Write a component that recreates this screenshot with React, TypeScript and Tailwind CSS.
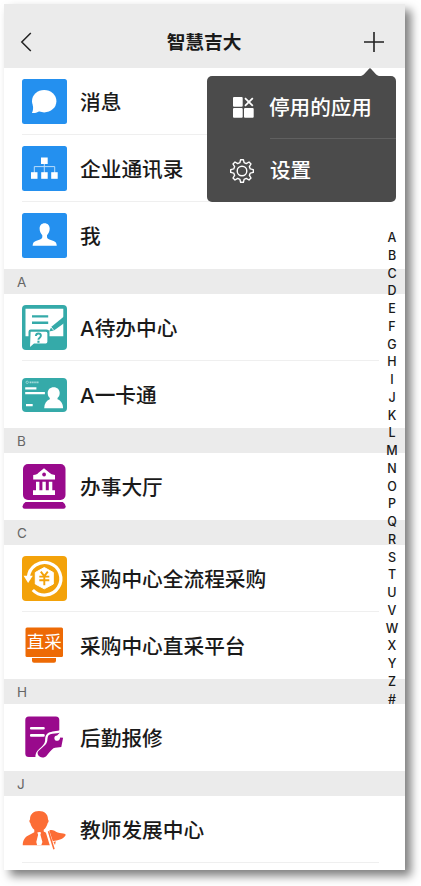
import type { ReactNode } from 'react';

const MessageIcon = () => (
  <svg viewBox="0 0 45 45" className="w-[45px] h-[45px]">
    <rect width="45" height="45" rx="2.5" fill="#2490ef" />
    <ellipse cx="22.2" cy="22.2" rx="12.2" ry="11.2" fill="#fff" />
    <path d="M10.8 26c.6 3 .3 5.800-.9 8 3.200.3 5.700-.5 8-2.300z" fill="#fff" />
  </svg>
);

const OrgIcon = () => (
  <svg viewBox="0 0 45 45" className="w-[45px] h-[45px]">
    <rect width="45" height="45" rx="2.5" fill="#2490ef" />
    <path d="M22.3 17v10M12.3 27v-6.400h20.400V27" fill="none" stroke="#b9dcfb" strokeWidth="1" />
    <g fill="#fff">
      <rect x="19" y="11.5" width="6.700" height="6.500" />
      <rect x="9" y="26.200" width="6.500" height="6.600" />
      <rect x="19.200" y="26.200" width="6.500" height="6.600" />
      <rect x="29.200" y="26.200" width="6.500" height="6.600" />
    </g>
  </svg>
);

const MeIcon = () => (
  <svg viewBox="0 0 45 45" className="w-[45px] h-[45px]">
    <rect width="45" height="45" rx="2.5" fill="#2490ef" />
    <path
      d="M22.600 10.300c3 0 5.100 2.200 5.100 5.300 0 2.700-1.100 5.200-2.700 6.600v1.900c0 1.300 1 1.900 2.400 2.400l4.200 1.500c2 .8 3 1.900 3.200 4.700H10.600c.2-2.800 1.200-3.900 3.200-4.700l4.200-1.500c1.400-.5 2.300-1.100 2.300-2.400v-1.900c-1.600-1.400-2.700-3.900-2.700-6.600 0-3.100 2-5.300 5-5.300z"
      fill="#fff"
    />
  </svg>
);

const TodoIcon = () => (
  <svg viewBox="0 0 45 45" className="w-[45px] h-[45px]">
    <rect width="45" height="45" rx="4" fill="#35aaa9" />
    <path d="M3.500 3.800h37.800v27.500H3.500z" fill="#fff" />
    <path d="M10 11.400h16.200M10 17.700h16.200" stroke="#35aaa9" strokeWidth="2.400" />
    <path d="M42 11.500 29.400 21.800l-2.300 4.600 4.800-.9L42 18.300z" fill="#35aaa9" />
    <path d="m29 21.900 2.800 3.600" stroke="#fff" strokeWidth=".9" />
    <path
      d="M8.700 25.700h15.600q2 0 2 2v9.600q0 2-2 2H12.200L7.700 42.500V26.700q0-1 1-1z"
      fill="#fff"
      stroke="#35aaa9"
      strokeWidth="2.400"
    />
    <path d="M8.700 26.700h15.200q1.400 0 1.400 1.500v8.600q0 1.600-1.500 1.600H11.900L8 42z" fill="#fff" />
    <path d="M13.900 31c.1-1.700 1.100-2.500 2.500-2.500 1.500 0 2.500.9 2.500 2.200 0 1.900-2.500 2-2.500 4" fill="none" stroke="#35aaa9" strokeWidth="1.900" />
    <rect x="15.400" y="35.700" width="2.100" height="2.100" fill="#35aaa9" />
  </svg>
);

const CardIcon = () => (
  <svg viewBox="0 0 45 34" className="w-[45px] h-[34px]">
    <rect width="45" height="34" rx="4" fill="#35aaa9" />
    <circle cx="5.200" cy="4.300" r="1.200" fill="none" stroke="#c9ebea" strokeWidth=".6" />
    <path d="M7.700 4.300h9" stroke="#c9ebea" strokeWidth="1.800" strokeDasharray="1.100 .8" />
    <path d="M3.200 10.300h11.200M3.200 15.200h19.700M4 27.200h6.700" stroke="#fff" strokeWidth="2.300" />
    <path
      d="M31.700 9.300c3.600 0 6 2.400 6 5.700 0 2.100-.8 3.900-2.200 5.100v1.200c3.400 1.300 5.500 4.400 5.600 8.900H22.200c.1-4.500 2.200-7.600 5.600-8.900v-1.200c-1.300-1.200-2.100-3-2.100-5.100 0-3.300 2.400-5.700 6-5.700z"
      fill="#fff"
    />
  </svg>
);

const HallIcon = () => (
  <svg viewBox="0 0 45 45" className="w-[45px] h-[45px]">
    <rect x="1" width="42.500" height="36" rx="5" fill="#990a8c" />
    <path d="M3.500 38h37.300q2.900 2 2.900 4.600 0 2.200-2.200 2.200H2.700q-2.200 0-2.200-2.200Q.5 40 3.500 38z" fill="#990a8c" />
    <path d="m22 4.200 5.800 4.800q1 1.500 5.200 2v4.600H11.200V11q4.200-.5 5-2z" fill="#fff" />
    <circle cx="22.100" cy="10.500" r="1.900" fill="#990a8c" />
    <path d="M14 17.800h3.400v8.400h3V17.800h3.400v8.400h3V17.800h3.500v8.400H33V31H11v-4.800h3z" fill="#fff" />
  </svg>
);

const PurchaseIcon = () => (
  <svg viewBox="0 0 45 45" className="w-[45px] h-[45px]">
    <rect width="45" height="45" rx="4" fill="#f3a20a" />
    <path d="M6.300 21.500A16.300 16.300 0 1 1 10.800 34" fill="none" stroke="#fff" strokeWidth="3.200" />
    <path d="M1.600 19.800h9.200L6.100 27z" fill="#fff" />
    <path d="m22.300 11.500 9 5v11.500l-9 4.800-9-4.800V16.500z" fill="#fff" stroke="#fff" strokeWidth="1" strokeLinejoin="round" />
    <path d="m18.800 15.700 3.500 4.500 3.500-4.500M17.300 20.600h10M17.300 24.300h10M22.300 20v9.300" fill="none" stroke="#f3a20a" strokeWidth="1.900" />
  </svg>
);

const DirectIcon = () => (
  <svg viewBox="0 0 45 45" className="w-[45px] h-[45px]">
    <rect x="3.500" y="4.400" width="37.500" height="29.600" rx="1.500" fill="#ed6a05" />
    <path d="M10 35h24v2.800q0 2-2 2H12q-2 0-2-2z" fill="#ed6a05" />
    <text x="22.200" y="25.200" textAnchor="middle" fontSize="17.500" fill="#fff" fontFamily="'Noto Sans CJK SC', sans-serif">
      直采
    </text>
  </svg>
);

const RepairIcon = () => (
  <svg viewBox="0 0 45 45" className="w-[45px] h-[45px]">
    <rect x="3.300" y="1.400" width="34" height="40.700" rx="3.500" fill="#990a8c" />
    <path d="M9.200 13.200H21.500M9.200 20.400H21.500" stroke="#fff" strokeWidth="2.600" strokeLinecap="round" />
    <path d="M13.400 43c-.3-4.200 1-6.500 4-9.300 2.700-2.500 5.500-4.800 5.700-8 .1-3 .1-5.500 2.400-7.300 2.800-1.900 6.500-2 12.500-3.200V43z" fill="#fff" />
    <path
      d="M16.400 36c3.700-3.500 8.200-6 8.900-10.200.5-3.300.1-5.500 3-6.500 2.700-.8 6.300-.8 9.400-1.600l-2.600 2.900c-1.800.1-2.900 1.200-2.700 2.800.2 2.200 2.200 2.900 4.100 2 1.200-.7 1.500-2 1.700-3l2.900.4-1.800 9.100c-2.500.5-5.900.2-7.900 1.400-2.100 1.400-4.600 4.900-6.600 7.300-1.800 2.200-4.900 2.600-6.900 1.200-2.400-1.500-3-4.200-1.500-5.800z"
      fill="#990a8c"
    />
  </svg>
);

const TeacherIcon = () => (
  <svg viewBox="0 0 45 45" className="w-[45px] h-[45px]">
    <path
      d="M17 4c5.600 0 9 3 9 8.500.9.500.8 2.900-.3 3.500-.7 2.900-2 5.200-4 6.700v1.800l5 2.400 3 11.300H.8c-.2-3.500 1.500-8.200 5.400-9.800l6.100-3.100v-2.600c-2-1.500-3.300-3.800-4-6.700-1.100-.6-1.200-3-.3-3.500C8 7 11.400 4 17 4z"
      fill="#fc6d35"
    />
    <path d="m15.300 25.500 2-.6 1.800.6-.7 2.300 2 7.300-1.100 3.100h-4.200l-.8-3.100 1.800-7.300z" fill="#fff" />
    <path d="m24.500 23.700 6 19.300" stroke="#fff" strokeWidth="2.400" />
    <path d="m26.500 24.300 5.500 18" stroke="#fc6d35" strokeWidth="1.500" />
    <path d="M27.300 23.500c3.300-1.400 5.300.7 8.400 2 2.800 1 4.900.4 7.400 1.600.8.500.6 1.300 0 2-2.800 3.400-6.700 4.400-12.300 5.100z" fill="#fc6d35" />
    <path d="m31.500 35 2.300-.7-.8 3.600z" fill="#fc6d35" />
  </svg>
);

const AppsIcon = () => (
  <svg viewBox="0 0 21 21" className="w-[21px] h-[21px]" fill="#fff">
    <rect width="9.700" height="9.700" rx="1" />
    <rect y="11" width="9.700" height="9.700" rx="1" />
    <rect x="11" y="11" width="9.700" height="9.700" rx="1" />
    <path d="m12 1.200 7.800 7.600M19.800 1.200 12 8.800" stroke="#fff" strokeWidth="1.800" />
  </svg>
);

const GearIcon = () => (
  <svg viewBox="0 0 24 24" className="w-6 h-6" fill="none" stroke="#fff" strokeWidth="1.400" strokeLinejoin="round">
    <path d="M10.600.7h2.800l.7 3 2.200.9 2.700-1.600 2 2-1.600 2.700.9 2.200 3 .7v2.800l-3 .7-.9 2.200 1.600 2.700-2 2-2.700-1.600-2.200.9-.7 3h-2.800l-.7-3-2.200-.9L5 21l-2-2 1.600-2.700-.9-2.200-3-.7v-2.800l3-.7.9-2.200L3 5l2-2 2.700 1.600 2.200-.9z" />
    <circle cx="12" cy="12" r="4.800" />
  </svg>
);

type Item = { name: string; icon: ReactNode };
type Group = { letter?: string; items: Item[] };

const groups: Group[] = [
  {
    items: [
      { name: '消息', icon: <MessageIcon /> },
      { name: '企业通讯录', icon: <OrgIcon /> },
      { name: '我', icon: <MeIcon /> },
    ],
  },
  {
    letter: 'A',
    items: [
      { name: 'A待办中心', icon: <TodoIcon /> },
      { name: 'A一卡通', icon: <CardIcon /> },
    ],
  },
  { letter: 'B', items: [{ name: '办事大厅', icon: <HallIcon /> }] },
  {
    letter: 'C',
    items: [
      { name: '采购中心全流程采购', icon: <PurchaseIcon /> },
      { name: '采购中心直采平台', icon: <DirectIcon /> },
    ],
  },
  { letter: 'H', items: [{ name: '后勤报修', icon: <RepairIcon /> }] },
  { letter: 'J', items: [{ name: '教师发展中心', icon: <TeacherIcon /> }] },
];

const letters = 'ABCDEFGHIJKLMNOPQRSTUVWXYZ#'.split('');

export default function App() {
  return (
    <div className="h-[886px] w-[421px] overflow-hidden bg-white pl-1 pt-1 font-['Inter','Noto_Sans_CJK_SC',sans-serif] text-[#1a1a1a]">
      <div className="relative h-[866px] w-[401px] bg-white shadow-[6px_6px_9px_rgba(0,0,0,0.5)]">
        <header className="flex h-16 items-center justify-between bg-[#ebebeb] pl-4 pr-[21px] pt-[11px]">
          <svg viewBox="0 0 12 20" className="h-5 w-3" fill="none" stroke="#222" strokeWidth="1.500">
            <path d="M10.800 1 1.800 10l9 9" />
          </svg>
          <h1 className="pl-3 pt-0.5 text-[18.700px] font-bold leading-6">智慧吉大</h1>
          <svg viewBox="0 0 20 20" className="h-5 w-5" stroke="#222" strokeWidth="1.600">
            <path d="M10 0v20M0 10h20" />
          </svg>
        </header>

        <main>
          {groups.map((group, index) => (
            <section key={index}>
              {group.letter && (
                <h2 className="flex h-[25px] items-center bg-[#ebebeb] pl-[13px] pt-px text-[13.500px] text-[#666]">
                  {group.letter}
                </h2>
              )}
              {group.items.map((item, i) => (
                <div key={item.name} className="relative flex h-[67px] items-center pl-[18px]">
                  {item.icon}
                  <span className="ml-[13px] pt-0.5 text-[20.700px] font-medium leading-7">{item.name}</span>
                  {(i < group.items.length - 1 || group.letter === 'J') && (
                    <div className="absolute bottom-0 left-[18px] h-px w-[357px] bg-[#efefef]" />
                  )}
                </div>
              ))}
            </section>
          ))}
        </main>

        {/* Letter index */}
        <nav className="absolute right-[3px] top-[225.500px] flex w-5 flex-col items-center text-[12.500px] font-medium">
          {letters.map((letter) => (
            <span key={letter} className="flex h-[17.750px] items-center">
              {letter}
            </span>
          ))}
        </nav>

        {/* Popup menu */}
        <div className="absolute left-[203px] top-16 w-[189px] text-white">
          <svg viewBox="0 0 18 8" className="ml-[154px] block h-2 w-[18px]" fill="#4b4b4b">
            <path d="M0 8C3 8 7.500.3 9 .3S15 8 18 8z" />
          </svg>
          <div className="h-[126px] rounded-[5px] bg-[#4b4b4b] text-[20.600px] font-medium leading-7">
            <div className="flex h-[63px] items-center pl-[26px]">
              <AppsIcon />
              <span className="ml-[15px] pt-px">停用的应用</span>
            </div>
            <div className="ml-[63px] -mt-px h-px bg-[#606060]" />
            <div className="flex h-[63px] items-center pl-[23px]">
              <GearIcon />
              <span className="ml-4 pt-px">设置</span>
            </div>
          </div>
        </div>
      </div>
    </div>
  );
}
